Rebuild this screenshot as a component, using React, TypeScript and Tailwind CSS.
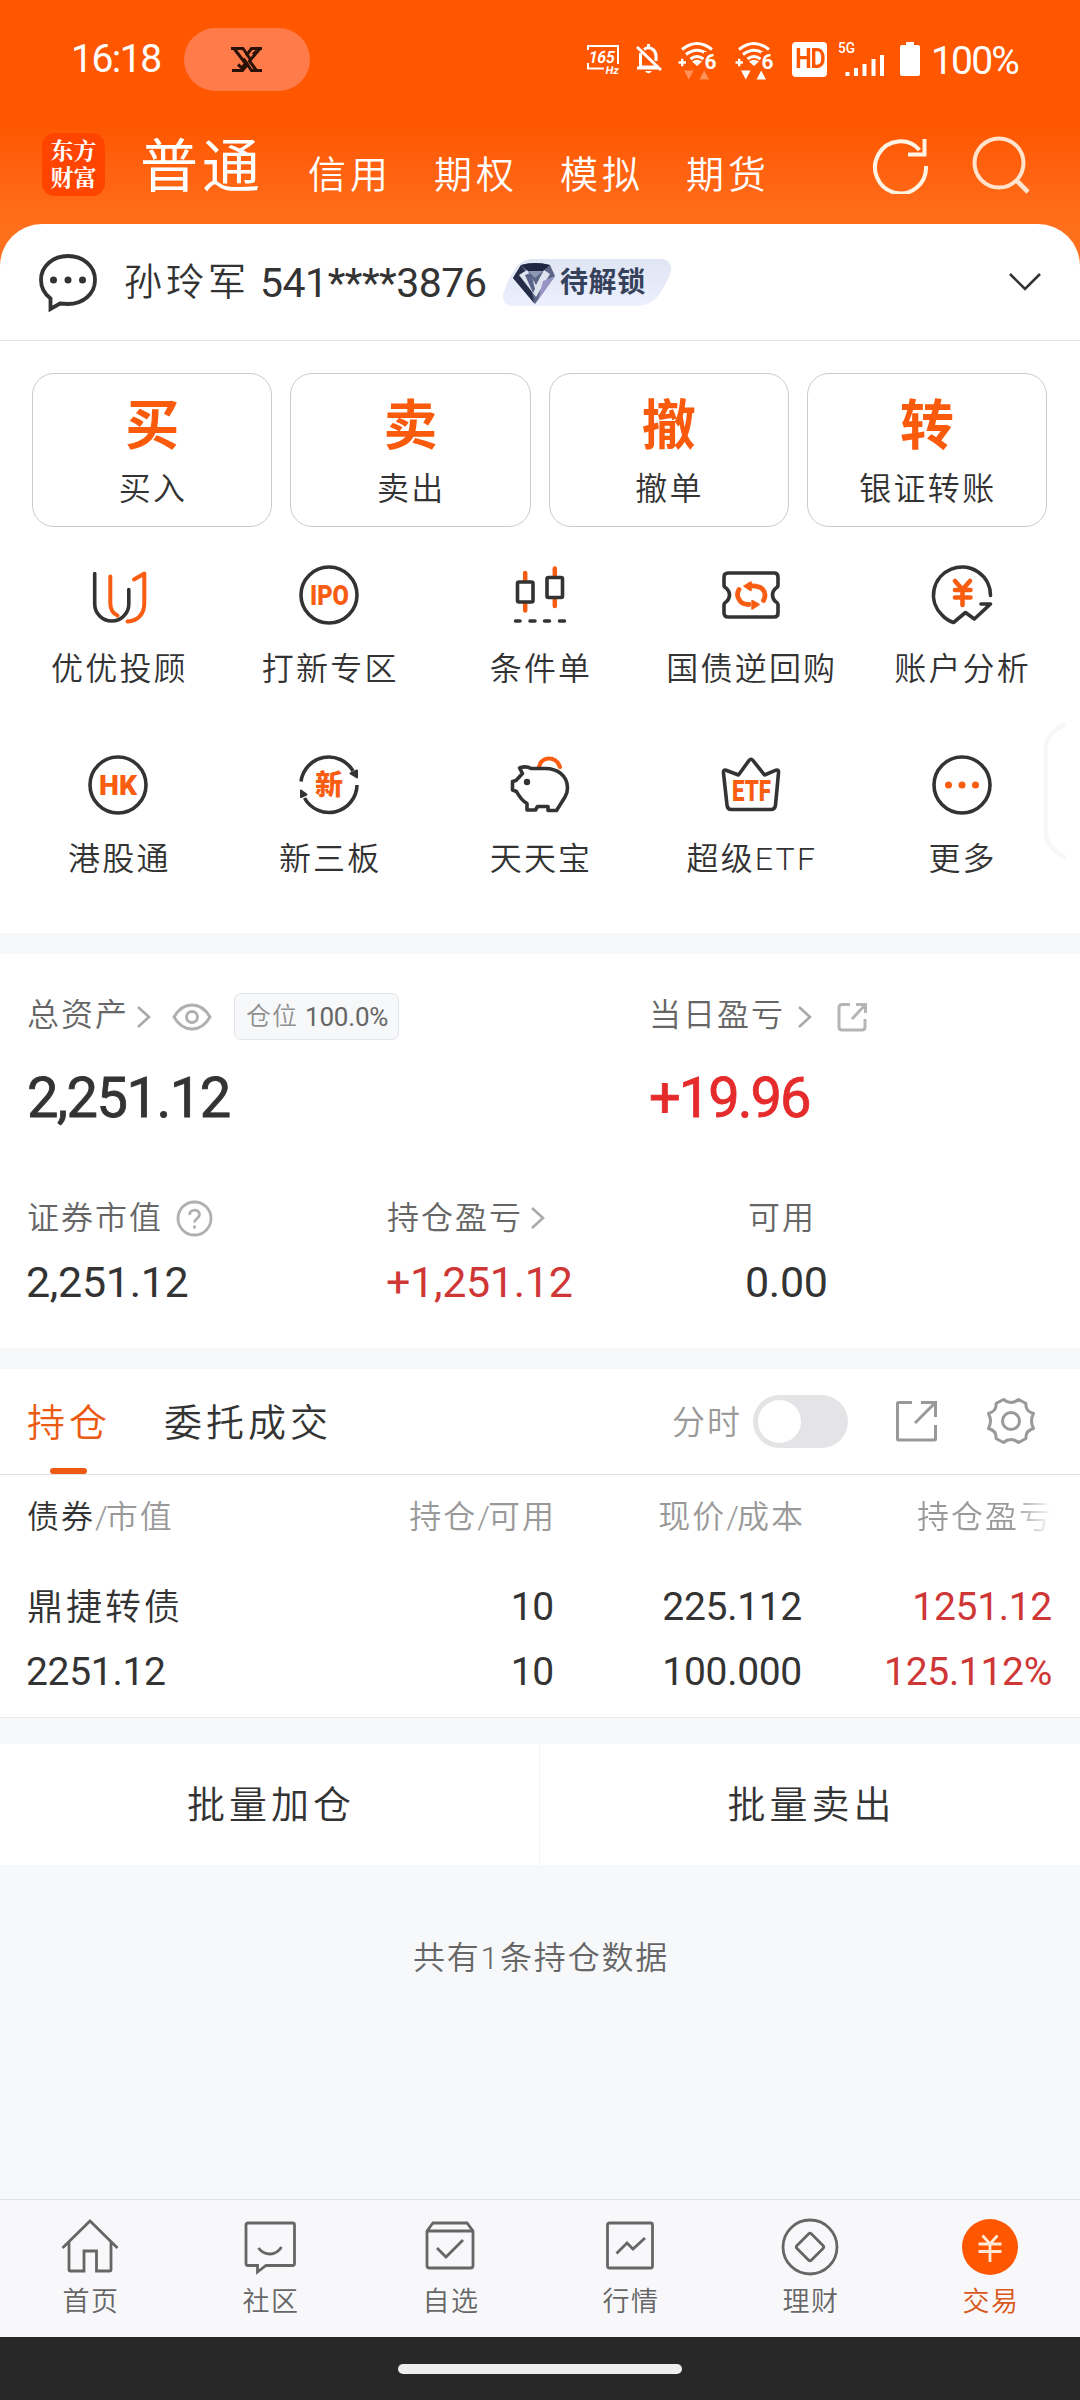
import React from 'react';
import clsx from 'clsx';

const DARK = '#333333';
const ORANGE = '#f95d12';

function Wifi6({ dim }: { dim?: boolean }) {
  return (
    <svg width="40" height="40" viewBox="0 0 40 40" fill="none" stroke="#fff" strokeWidth="3">
      <path d="M4 8.500Q19 -3.500 34 8.500M8 13.500Q19 5 30 13.500M12.500 18Q19 13 25.500 18" />
      <path d="M14 20.500Q19 17 24 20.500L19 25Z" fill="#fff" stroke="none" />
      <path d="M0.500 21.500H8M4.200 17.700V25.300" strokeWidth="2.400" />
      <rect x="26" y="11" width="14" height="18" fill="#ff5600" stroke="none" />
      <text x="26.500" y="27.500" fontSize="21" fontWeight="700" fill="#fff" stroke="none" textLength="12" lengthAdjust="spacingAndGlyphs">6</text>
      <g fill="#fff" stroke="none" opacity={dim ? 0.35 : 1}>
        <path d="M6 29.500H15.500L10.800 38.500Z" />
        <path d="M21.500 38.500H31L26.200 29.500Z" />
      </g>
    </svg>
  );
}

function StatusBar() {
  return (
    <div className="flex h-[118px] items-center pl-[71px] text-white">
      <span className="w-[113px] pt-[1px] text-[39px] leading-none font-normal tracking-[-1.500px]">16:18</span>
      <div className="flex h-[63px] w-[126px] items-center justify-center rounded-full bg-[#ff7c4a] pr-[1px]">
        <svg width="32" height="25" viewBox="0 0 32 25" fill="none" stroke="#2a1208" strokeWidth="3">
          <path d="M0 1.500H12L16.500 8M3 1.500L14.500 16.500L11 21L7 17.500M1 23.500H11.500L16.500 17.500L12.500 11.500" />
          <path d="M31 1.500H20.500L16 7.500L19.500 12.500M29 1.500L18.500 14L25.500 23.500M31 23.500H20.500L16 17M22 7.500L25.500 4" />
        </svg>
      </div>

      <div className="flex items-center pl-[277px]">
        <svg width="34" height="38" viewBox="0 0 34 38" fill="none" stroke="#fff" strokeWidth="2">
          <path d="M1 6H31V24M1 5V10M1 23V28.500H17" />
          <g fill="#fff" stroke="none" fontWeight="700">
            <text x="5" y="23" fontSize="17" transform="skewX(-10)" textLength="26" lengthAdjust="spacingAndGlyphs">165</text>
            <text x="24" y="34" fontSize="11" transform="skewX(-10)">Hz</text>
          </g>
        </svg>
        <svg className="ml-[15px]" width="26" height="32" viewBox="0 0 26 32" fill="none" stroke="#fff" strokeWidth="3">
          <path d="M1 4L25 27M4.500 10V24H21M1 25H22M8 6.500Q12.500 3 17 6.500Q20 9 20 13V18M12.500 1V5" />
          <path d="M9 28H16Q12.500 32.500 9 28Z" fill="#fff" stroke="none" />
        </svg>
        <div className="ml-[16px] flex gap-[17px] pt-[3px]">
          <Wifi6 dim />
          <Wifi6 />
        </div>
        <div className="ml-[17px] flex h-[35px] w-[35px] items-center justify-center rounded-[4px] bg-white text-[27px] leading-none font-bold tracking-[-1.500px] text-[#ff5600]">
          <span className="scale-x-[.86]">HD</span>
        </div>
        <svg className="ml-[11px]" width="48" height="36" viewBox="0 0 48 36" fill="#fff">
          <text x="0" y="11.500" fontSize="14" fontWeight="500" textLength="17" lengthAdjust="spacingAndGlyphs">5G</text>
          <rect x="7.500" y="31" width="4" height="4" />
          <rect x="16" y="27" width="4" height="8" />
          <rect x="24.500" y="23" width="4" height="12" />
          <rect x="33.500" y="18" width="4" height="17" />
          <rect x="42" y="14" width="4" height="21" />
        </svg>
        <svg className="ml-[14px]" width="20" height="35" viewBox="0 0 20 35" fill="#fff">
          <path d="M6 0H14V3H18Q20 3 20 5V32Q20 34 18 34H2Q0 34 0 32V5Q0 3 2 3H6Z" />
        </svg>
        <span className="ml-[11px] pt-[4px] text-[39px] leading-none font-normal tracking-[-1.800px]">100%</span>
      </div>
    </div>
  );
}

function Header() {
  const tabs = ['信用', '期权', '模拟', '期货'];
  return (
    <div className="flex h-[106px] items-start pl-[42px] text-white">
      <div className="mt-[15px] flex h-[63px] w-[63px] flex-col items-center justify-center rounded-[13px] bg-[#ff4400] font-[Liberation_Serif,Noto_Serif_CJK_SC,Noto_Sans_CJK_SC,serif] text-[23px] leading-[27px] font-bold">
        <span>东方</span>
        <span>财富</span>
      </div>
      <span className="mt-[20px] ml-[35px] w-[168px] text-[58px] leading-none font-normal tracking-[4px]">普通</span>
      <div className="mt-[38px] flex gap-[46px] text-[38px] leading-none tracking-[4px]">
        {tabs.map((t) => (
          <span key={t} className="w-[80px] whitespace-nowrap">{t}</span>
        ))}
      </div>
      <svg className="mt-[18px] ml-[106px]" width="58" height="58" viewBox="0 0 58 58" fill="none" stroke="#fff4e4" strokeWidth="4">
        <path d="M47.500 14A25.500 26 0 1 0 54 30" />
        <path d="M52.500 3V18.500H36" />
      </svg>
      <svg className="mt-[17px] ml-[42px]" width="60" height="60" viewBox="0 0 60 60" fill="none" stroke="#ffe3cc" strokeWidth="4">
        <circle cx="27" cy="28" r="24.500" />
        <path d="M43.500 44.500L56 57" strokeWidth="4.600" />
      </svg>
    </div>
  );
}

function AccountRow() {
  return (
    <div className="flex h-[117px] items-center border-b border-[#e4e4e4] pl-[38px]">
      <svg width="60" height="60" viewBox="0 0 60 60" fill="none" stroke={DARK} strokeWidth="3.800">
        <path d="M12.500 57V46.500C6 41.500 3 35 3 28C3 14 15 4 30 4S57 14 57 28S45 52 30 52L22 51.500Z" />
        <g fill={DARK} stroke="none">
          <circle cx="15.500" cy="28" r="3.500" />
          <circle cx="30" cy="28" r="3.500" />
          <circle cx="44.500" cy="28" r="3.500" />
        </g>
      </svg>
      <span className="ml-[26px] w-[136px] text-[38px] leading-none tracking-[4px]">孙玲军</span>
      <span className="w-[243px] pt-[2px] text-[41px] leading-none font-normal tracking-[-.500px]">541****3876</span>
      <div className="relative flex h-[47px] w-[168px] items-center pl-[57px]">
        <svg className="absolute top-0 left-0" width="168" height="47" viewBox="0 0 168 47">
          <defs>
            <linearGradient id="tag" x1="0" y1="0" x2="0" y2="1">
              <stop offset="0" stopColor="#e0e5f3" />
              <stop offset="1" stopColor="#ebeffe" />
            </linearGradient>
          </defs>
          <path d="M30 0H158Q169 1 168 12Q164 24 157 34Q149 47 132 47H9Q-1 46 0 36Q4 22 10 13Q17 0 30 0Z" fill="url(#tag)" />
          <path d="M10 19L18 6Q32 2 47 6L52 17L32 45Z" fill="#5b6585" />
          <path d="M10 19L18 6L26 18L31 44Z" fill="#242c48" />
          <path d="M18 6Q32 2 47 6L40 12H25Z" fill="#1f2740" />
          <path d="M16 16L24 11L33 26L41 11L47 15L33 38Z" fill="#dfe3ee" />
          <path d="M22 16L28 14L32 30L30 34Z" fill="#59648a" />
          <path d="M40 22L52 17L35 41Z" fill="#9a94c4" />
          <path d="M25 12L32 19L40 12Z" fill="#8d97b5" />
        </svg>
        <span className="relative pt-[2px] text-[28px] leading-none font-bold tracking-[.600px] text-[#36425c]">待解锁</span>
      </div>
      <svg className="ml-[337px]" width="34" height="20" viewBox="0 0 34 20" fill="none" stroke={DARK} strokeWidth="2.600">
        <path d="M2 2L17 17L32 2" />
      </svg>
    </div>
  );
}

const actions = [
  { big: '买', label: '买入' },
  { big: '卖', label: '卖出' },
  { big: '撤', label: '撤单' },
  { big: '转', label: '银证转账' },
];

function ActionCards() {
  return (
    <div className="grid grid-cols-4 gap-[18px] pt-[32px] pr-[33px] pl-[32px]">
      {actions.map((a) => (
        <div key={a.big} className="flex h-[154px] flex-col items-center rounded-[22px] border border-[#cccccc]">
          <span className="mt-[26px] text-[54px] leading-none font-bold text-[#fa5a0c]">{a.big}</span>
          <span className="mt-[19px] pl-[2px] text-[32px] leading-none tracking-[2.300px]">{a.label}</span>
        </div>
      ))}
    </div>
  );
}

function Glyph({ children }: { children: React.ReactNode }) {
  return (
    <svg width="60" height="60" viewBox="0 0 60 60" fill="none" stroke={DARK} strokeWidth="3.600" strokeLinecap="round" strokeLinejoin="round" className="overflow-visible">
      {children}
    </svg>
  );
}

const shortcuts = [
  {
    label: '优优投顾',
    icon: (
      <>
        <path d="M6.700 8.500V39A17 17 0 0 0 40.800 39V24.500" />
        <path d="M22.300 11.500V38C22.300 44 25 48.500 29.500 50.500M46 14.500L56.300 8.500V38C56.300 49 50 56 39.500 56.500" stroke={ORANGE} strokeWidth="4" />
      </>
    ),
  },
  {
    label: '打新专区',
    icon: (
      <>
        <circle cx="30" cy="30" r="28" />
        <text x="11" y="40" fontSize="28" fontWeight="900" fill={ORANGE} stroke="none" textLength="39" lengthAdjust="spacingAndGlyphs">IPO</text>
      </>
    ),
  },
  {
    label: '条件单',
    icon: (
      <>
        <path d="M15.200 8V15M15.200 39V45.500M44.800 3.500V10.500M44.800 34.500V41" stroke={ORANGE} strokeWidth="4.500" />
        <rect x="7.500" y="17" width="15.500" height="20" rx="1.500" />
        <rect x="37" y="12.500" width="15.500" height="20" rx="1.500" />
        <path d="M5.500 56H10M20 56H25M34.500 56H39.500M49.500 56H54.500" strokeWidth="3.500" />
      </>
    ),
  },
  {
    label: '国债逆回购',
    icon: (
      <>
        <path d="M7 8H53Q57 8 57 12V20Q57 22 55 23Q51.500 26 51.500 30Q51.500 34 55 37Q57 38 57 40V48Q57 52 53 52H7Q3 52 3 48V40Q3 38 5 37Q8.500 34 8.500 30Q8.500 26 5 23Q3 22 3 20V12Q3 8 7 8Z" />
        <g stroke={ORANGE}>
          <path d="M18 24.500Q14.500 30 19 36Q22 39.500 28 39.500M28 21Q37 20 41.500 24Q46 29 42.500 35.500" strokeWidth="4.800" />
          <path d="M30 17V25.500L23 21.200ZM31 35.500V44L38 39.500Z" fill={ORANGE} strokeWidth="1.500" />
        </g>
      </>
    ),
  },
  {
    label: '账户分析',
    icon: (
      <>
        <path d="M58.500 30.500A28.500 28 0 1 0 10 50Q15 55.500 21.500 57.500L33.500 47.500L42.300 54L58.500 39H49" />
        <path d="M23 16L30.500 24.500L38 16M23 25H38.500M23 32.500H38.500M30.500 25V40" stroke={ORANGE} strokeWidth="4.600" />
      </>
    ),
  },
  {
    label: '港股通',
    icon: (
      <>
        <circle cx="30" cy="30" r="28" />
        <text x="11" y="40" fontSize="28" fontWeight="900" fill={ORANGE} stroke="none" textLength="38" lengthAdjust="spacingAndGlyphs">HK</text>
      </>
    ),
  },
  {
    label: '新三板',
    icon: (
      <>
        <path d="M2 26.500A28 28 0 0 1 54 16M58 30A28 28 0 0 1 5.500 43" strokeLinecap="butt" />
        <path d="M51.500 18.500L58 15.500V22.500ZM2 42V35.500L7.500 39.500Z" fill={DARK} strokeWidth="2" />
        <text x="30" y="40" fontSize="28" fontWeight="900" fill={ORANGE} stroke="none" textAnchor="middle">新</text>
      </>
    ),
  },
  {
    label: '天天宝',
    icon: (
      <>
        <path d="M29 12Q31 3.500 39 3.500T50 12" stroke={ORANGE} strokeWidth="4" />
        <path d="M12.500 18.500L9.500 13Q16 10.500 21 13.500H34C48 13 57.500 21 57.500 33Q57.500 38 55 42L46.500 55.500H38V51.500H27.500L25.500 55H17V48.500Q11 45 6.500 36.500L2.500 35V26.500L6 25.500Z" />
        <circle cx="17" cy="27" r="3.200" fill={DARK} stroke="none" />
      </>
    ),
  },
  {
    label: '超级ETF',
    icon: (
      <>
        <path d="M5 15.200L17.500 20L28 5.500Q30 3 32 5.500L43.500 20L55 15.200Q58 14.500 57.500 18L54.500 50Q54 54.500 50 54.500H10Q6.500 54.500 6 50L2.500 18Q2.200 14.300 5 15.200Z" />
        <text x="11" y="46" fontSize="29" fontWeight="900" fill={ORANGE} stroke="none" textLength="39" lengthAdjust="spacingAndGlyphs">ETF</text>
      </>
    ),
  },
  {
    label: '更多',
    icon: (
      <>
        <circle cx="30" cy="30" r="28" />
        <g fill={ORANGE} stroke="none">
          <circle cx="16.500" cy="30" r="3.500" />
          <circle cx="30" cy="30" r="3.500" />
          <circle cx="43.500" cy="30" r="3.500" />
        </g>
      </>
    ),
  },
];

function Shortcuts() {
  return (
    <div className="relative">
      <div className="grid h-[406px] grid-cols-5 px-[13px] pt-[38px]">
        {shortcuts.map((s) => (
          <div key={s.label} className="flex h-[190px] flex-col items-center">
            <Glyph>{s.icon}</Glyph>
            <span className="mt-[28px] pl-[2px] text-[32px] leading-none tracking-[2.200px]">{s.label}</span>
          </div>
        ))}
      </div>
      {/* docked handle of the floating widget */}
      <svg className="absolute top-[196px] right-[13px]" width="24" height="140" viewBox="0 0 24 140" fill="none" stroke="#f7f7f8" strokeWidth="4.500" strokeLinecap="round">
        <path d="M21 2C9 8 2.500 16 2.500 27V109C2.500 119 9 127 21 134" />
      </svg>
    </div>
  );
}

function Arrow() {
  return (
    <svg width="16" height="24" viewBox="0 0 16 24" fill="none" stroke="#aaaaaa" strokeWidth="2.600">
      <path d="M2 2L13 12L2 22" />
    </svg>
  );
}

function Assets() {
  return (
    <div className="h-[394px] bg-white pt-[39px] pl-[27px] text-[#666666]">
      <div className="flex h-[47px] items-center text-[32px] leading-none tracking-[2px]">
        <span className="w-[109px] pb-[3px]">总资产</span>
        <Arrow />
        <svg className="ml-[20px]" width="40" height="28" viewBox="0 0 40 28" fill="none" stroke="#b0b0b0" strokeWidth="3">
          <path d="M2 14Q9 2 20 2T38 14Q31 26 20 26T2 14Z" />
          <circle cx="20" cy="14" r="5.500" />
        </svg>
        <div className="ml-[22px] flex h-[47px] w-[165px] items-center rounded-[7px] border border-[#e3e4e8] bg-[#f7f8fa] pl-[11px] text-[25px]">
          <span className="w-[59px] tracking-[1px] text-[#909090]">仓位</span>
          <span className="text-[26px] font-normal tracking-[-.200px]">100.0%</span>
        </div>
        <span className="ml-[250px] w-[148px] pb-[3px]">当日盈亏</span>
        <Arrow />
        <svg className="ml-[24px]" width="31" height="30" viewBox="0 0 31 30" fill="none" stroke="#b5b5b5" strokeWidth="3">
          <path d="M13 2.500H5Q2 2.500 2 5.500V25Q2 28 5 28H25Q28 28 28 25V17M19 2.500H28.500V11M28 3L15 17" />
        </svg>
      </div>
      <div className="mt-[28px] flex h-[60px] items-center text-[56px] leading-none font-normal tracking-[-1.500px] [-webkit-text-stroke:.8px_currentColor]">
        <span className="w-[622px] text-[#333333]">2,251.12</span>
        <span className="tracking-[-2px] text-[#e52b2b]">+19.96</span>
      </div>
      <div className="mt-[67px] flex items-start leading-none">
        <div className="w-[360px]">
          <div className="flex h-[46px] items-center text-[32px] tracking-[2px]">
            <span className="w-[149px]">证券市值</span>
            <svg width="37" height="37" viewBox="0 0 37 37" fill="none" stroke="#b0b0b0" strokeWidth="2.800">
              <circle cx="18.500" cy="18.500" r="16.500" />
              <path d="M13.500 15C13.500 8.500 23.500 8.500 23.500 14.500C23.500 18.500 18.500 18.500 18.500 22.500M18.500 25.500V28.500" />
            </svg>
          </div>
          <p className="mt-[20px] -ml-[1px] text-[43px] font-normal tracking-[-.300px] text-[#333333]">2,251.12</p>
        </div>
        <div className="w-[360px]">
          <div className="flex h-[46px] items-center text-[32px] tracking-[2px]">
            <span className="w-[143px]">持仓盈亏</span>
            <Arrow />
          </div>
          <p className="mt-[20px] -ml-[1px] text-[43px] font-normal tracking-[-.300px] text-[#cf3636]">+1,251.12</p>
        </div>
        <div>
          <p className="flex h-[46px] items-center pl-[1px] text-[32px] tracking-[2px]">可用</p>
          <p className="mt-[20px] -ml-[2px] text-[43px] font-normal tracking-[-.300px] text-[#333333]">0.00</p>
        </div>
      </div>
    </div>
  );
}

function Slash() {
  return <span className="tracking-[-2px]">/</span>;
}

function Holdings() {
  return (
    <div className="mt-[21px] h-[349px] border-b border-[#e9eaec] bg-white leading-none">
      <div className="flex h-[106px] items-start border-b border-[#e0e0e0] pl-[27px]">
        <div className="flex h-[105px] w-[137px] flex-col pt-[35px] text-[38px] tracking-[4px] text-[#ec5a12]">
          <span>持仓</span>
          <div className="mt-auto ml-[23px] h-[6px] w-[37px] rounded-[3px] bg-[#ee5a12]" />
        </div>
        <span className="w-[508px] pt-[35px] text-[38px] tracking-[4px]">委托成交</span>
        <span className="w-[81px] pt-[37px] text-[33px] tracking-[2px] text-[#999999]">分时</span>
        <div className="mt-[26px] h-[53px] w-[95px] rounded-full bg-[#e4e4e6] p-[5px]">
          <div className="h-[43px] w-[43px] rounded-full bg-white" />
        </div>
        <svg className="mt-[31px] ml-[47px]" width="43" height="43" viewBox="0 0 43 43" fill="none" stroke="#999999" strokeWidth="3">
          <path d="M17 2.500H3.500Q2.500 2.500 2.500 3.500V39Q2.500 40 3.500 40H39.500Q40.500 40 40.500 39V25M26 2.500H40.500V17M40 3L20 23" />
        </svg>
        <svg className="mt-[28px] ml-[48px]" width="50" height="48" viewBox="0 0 50 48" fill="none" stroke="#999999" strokeWidth="3" strokeLinejoin="round">
          <path d="M17.500 2.500Q21 5.500 25 5.500T32.500 2.500L40 6.500Q39 14 47.500 16.500Q43.500 24 47.500 31.500Q39 34 40 41.500L32.500 45.500Q29 42.500 25 42.500T17.500 45.500L10 41.500Q11 34 2.500 31.500Q6.500 24 2.500 16.500Q11 14 10 6.500Z" />
          <circle cx="25" cy="24" r="8.500" />
        </svg>
      </div>
      <div className="flex h-[84px] items-center text-[32px] tracking-[2px] text-[#999999]">
        <p className="w-[254px] pl-[27px]"><span className="text-[#333333]">债券</span><Slash />市值</p>
        <p className="w-[302px] text-right">持仓<Slash />可用</p>
        <p className="w-[249px] text-right">现价<Slash />成本</p>
        <p className="w-[248px] bg-linear-to-r from-[#999999] from-83% to-[#ffffff] bg-clip-text text-right text-transparent">持仓盈亏</p>
      </div>
      <div className="flex h-[97px] items-center text-[39px] font-normal tracking-[-.300px]">
        <p className="w-[254px] pl-[27px] text-[36px] font-[350] tracking-[3px]">鼎捷转债</p>
        <p className="w-[300px] text-right">10</p>
        <p className="w-[248px] text-right">225.112</p>
        <p className="w-[250px] text-right text-[#cf3636]">1251.12</p>
      </div>
      <div className="flex h-[33px] items-center text-[39px] font-normal tracking-[-.300px]">
        <p className="w-[254px] pl-[26px]">2251.12</p>
        <p className="w-[300px] text-right">10</p>
        <p className="w-[248px] text-right">100.000</p>
        <p className="w-[250px] text-right text-[#cf3636]">125.112%</p>
      </div>
    </div>
  );
}

const navItems = [
  { label: '首页', d: 'M2.500 31L30 4L57.500 31M9 25V53Q9 54 10 54H24V34H36.500V54H50Q51 54 51 53V25' },
  { label: '社区', d: 'M7.500 6H52.500Q54.500 6 54.500 8V46.500Q54.500 48.500 52.500 48.500H26L17.500 55V48.500H8Q6 48.500 6 46.500V8Q6 6 8 6M18.500 31Q23 37 30 37T41.500 30' },
  { label: '自选', d: 'M7 14L13 6H47L53 14V48.500Q53 51 50.500 51H9.500Q7 51 7 48.500ZM7 14H53M17 31L26 40L43 23' },
  { label: '行情', d: 'M9.500 6H50.500Q52.500 6 52.500 8V49Q52.500 51 50.500 51H9.500Q7.500 51 7.500 49V8Q7.500 6 9.500 6ZM16.500 36.500L27 26L33 32L45 21' },
  { label: '理财', d: 'M30 3A27 27 0 1 0 30 57A27 27 0 1 0 30 3ZM28.500 17Q30 15.500 31.500 17L43 28.500Q44.500 30 43 31.500L31.500 43Q30 44.500 28.500 43L17 31.500Q15.500 30 17 28.500Z' },
  { label: '交易', d: 'M22.500 18.500L30 27L37.500 18.500M18.500 27H41.500M18.500 34.500H41.500M30 27V45', active: true },
];

function BottomNav() {
  return (
    <div className="grid h-[138px] grid-cols-6 border-t border-[#e0e2e6] bg-[#f8f8fb]">
      {navItems.map((n) => (
        <div key={n.label} className={clsx('flex flex-col items-center pt-[17px]', n.active ? 'text-[#d9581a]' : 'text-[#666666]')}>
          <svg width="60" height="60" viewBox="0 0 60 60" fill="none" stroke={n.active ? '#ffe9d6' : '#666666'} strokeWidth="2.800">
            {n.active && <circle cx="30" cy="30" r="28" fill="#ff5600" stroke="none" />}
            <path d={n.d} />
          </svg>
          <span className="mt-[12px] pl-[2px] text-[27px] leading-none tracking-[1.500px]">{n.label}</span>
        </div>
      ))}
    </div>
  );
}

export default function App() {
  return (
    <div className="flex h-[2400px] w-[1080px] flex-col overflow-hidden bg-[#f7f8fa] font-[Roboto,Noto_Sans_CJK_SC,sans-serif] font-[350] text-[#333333]">
      <div className="bg-linear-to-b from-[#ff5600] from-36% to-[#ff701d] to-68%">
        <StatusBar />
        <Header />
        <div className="rounded-t-[42px] bg-white">
          <AccountRow />
        </div>
      </div>
      <div className="bg-white">
        <ActionCards />
        <Shortcuts />
      </div>
      <div className="h-[21px]" />
      <Assets />
      <Holdings />

      <div className="mt-[26px] grid h-[121px] grid-cols-2 bg-white text-[38px] leading-none tracking-[4px]">
        <div className="flex items-center justify-center border-r border-[#f3f4f6] pt-[1px] pl-[3px]">批量加仓</div>
        <div className="flex items-center justify-center pt-[1px] pl-[3px]">批量卖出</div>
      </div>
      <p className="mt-[77px] pl-[2px] text-center text-[32px] leading-none tracking-[1.800px] text-[#666666]">共有1条持仓数据</p>

      <div className="mt-auto">
        <BottomNav />
        <div className="flex h-[63px] justify-center bg-[#282828] pt-[27px]">
          <div className="h-[10px] w-[284px] rounded-full bg-[#eeeeee]" />
        </div>
      </div>
    </div>
  );
}
